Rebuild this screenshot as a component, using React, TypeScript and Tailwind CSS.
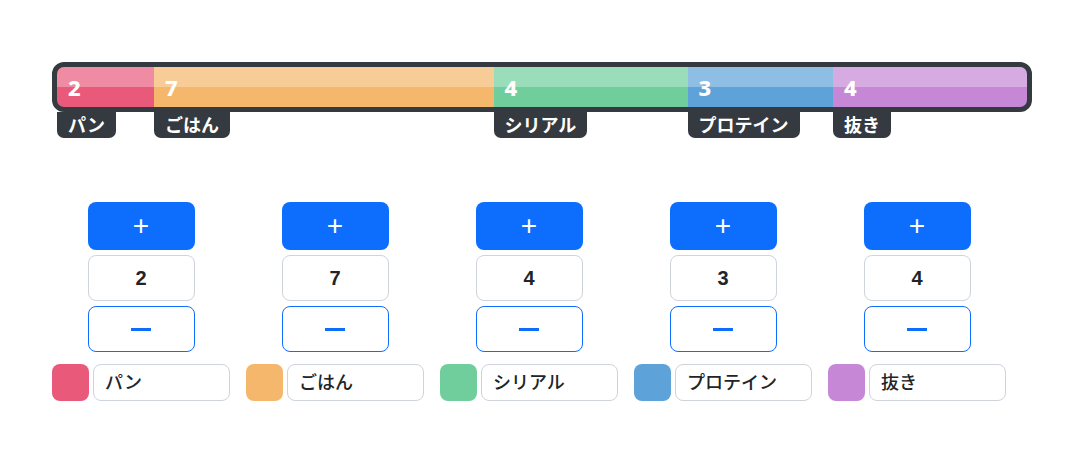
import React, { useState } from 'react';

interface Item {
  name: string;
  value: number;
  color: string;
}

const initialItems: Item[] = [
  { name: 'パン', value: 2, color: '#e9597a' },
  { name: 'ごはん', value: 7, color: '#f5b76b' },
  { name: 'シリアル', value: 4, color: '#6fce9c' },
  { name: 'プロテイン', value: 3, color: '#5da3d9' },
  { name: '抜き', value: 4, color: '#c587d6' },
];

const jp = { fontFamily: '"Noto Sans", "Noto Sans CJK JP", sans-serif' };
const latin = { fontFamily: '"Liberation Sans", "Noto Sans CJK JP", sans-serif' };

const App: React.FC = () => {
  const [items, setItems] = useState(initialItems);
  const total = items.reduce((s, it) => s + it.value, 0) || 1;

  const change = (i: number, d: number) => {
    setItems(items.map((it, j) => (j === i ? { ...it, value: Math.max(0, it.value + d) } : it)));
  };

  return (
    <div className="w-[1080px] h-[467px] bg-white pl-[52px] pt-[62px]" style={jp}>
      <div className="w-[980px]">
        <div className="border-[5px] border-[#343a40] rounded-[12px] bg-[#343a40]">
          <div className="flex h-[40px] rounded-[7px] overflow-hidden">
            {items.map((it) => (
              <div
                key={it.name}
                className="relative flex items-center pl-[11px] shrink-0"
                style={{ width: `${(it.value / total) * 100}%`, backgroundColor: it.color }}
              >
                <div className="absolute left-0 right-0 top-0 h-[20px] bg-white/30" />
                <span className="relative text-white font-extrabold text-[22px] leading-none">{it.value}</span>
              </div>
            ))}
          </div>
        </div>
        <div className="flex px-[5px]">
          {items.map((it) => (
            <div key={it.name} className="shrink-0" style={{ width: `${(it.value / total) * 100}%` }}>
              <span className="inline-flex h-[26px] items-center px-[11px] bg-[#343a40] rounded-b-[7px] text-white font-bold text-[18px] leading-none whitespace-nowrap">
                {it.name}
              </span>
            </div>
          ))}
        </div>
      </div>

      <div className="flex gap-[16px] mt-[64px]">
        {items.map((it, i) => (
          <div key={it.name} className="w-[178px] flex flex-col items-center">
            <button
              onClick={() => change(i, 1)}
              className="w-[107px] h-[48px] rounded-[8px] bg-[#0d6efd] text-white text-[28px] font-light flex items-center justify-center"
              style={latin}
            >
              +
            </button>
            <div
              className="mt-[5px] w-[107px] h-[46px] rounded-[8px] border border-[#ced4da] flex items-center justify-center text-[20px] font-bold text-[#212529]"
              style={latin}
            >
              {it.value}
            </div>
            <button
              onClick={() => change(i, -1)}
              className="mt-[5px] w-[107px] h-[46px] rounded-[8px] border border-[#0d6efd] bg-white flex items-center justify-center"
            >
              <span className="block w-[20px] h-[3px] bg-[#0d6efd]" />
            </button>
            <div className="mt-[12px] w-full flex items-center gap-[4px]">
              <div className="w-[37px] h-[37px] rounded-[8px] shrink-0" style={{ backgroundColor: it.color }} />
              <div className="flex-1 h-[37px] rounded-[8px] border border-[#ced4da] flex items-center pl-[11px] text-[18px] font-medium text-[#212529]">
                {it.name}
              </div>
            </div>
          </div>
        ))}
      </div>
    </div>
  );
};

export default App;
